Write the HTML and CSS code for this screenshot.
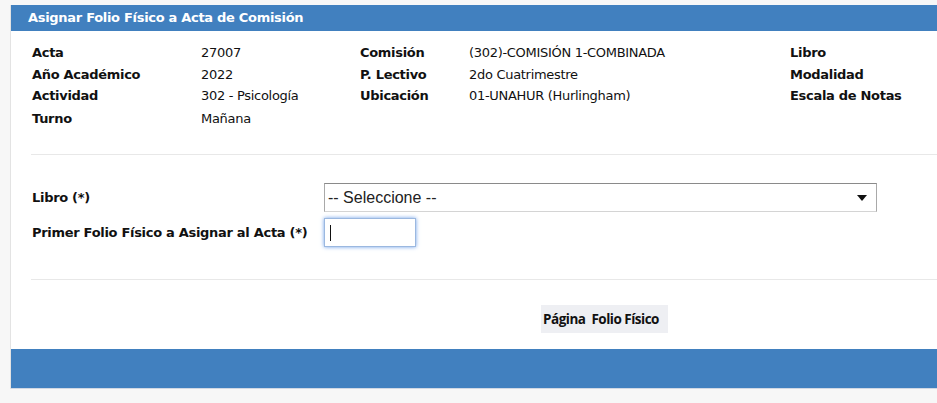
FILE: index.html
```html
<!DOCTYPE html>
<html lang="es">
<head>
  <meta charset="UTF-8" />
  <title>Asignar Folio Físico</title>
  <link rel="stylesheet" href="styles.css">
</head>
<body>

  <div class="panel">
    <div class="panel-titulo">Asignar Folio Físico a Acta de Comisión</div>

    <div class="datos">
      <div class="col col-1">
        <span class="lbl">Acta</span><span class="val">27007</span>
        <span class="lbl">Año Académico</span><span class="val">2022</span>
        <span class="lbl">Actividad</span><span class="val">302 - Psicología</span>
        <span class="lbl">Turno</span><span class="val">Mañana</span>
      </div>
      <div class="col col-2">
        <span class="lbl">Comisión</span><span class="val">(302)-COMISIÓN 1-COMBINADA</span>
        <span class="lbl">P. Lectivo</span><span class="val">2do Cuatrimestre</span>
        <span class="lbl">Ubicación</span><span class="val">01-UNAHUR (Hurlingham)</span>
      </div>
      <div class="col col-3">
        <span class="lbl">Libro</span>
        <span class="lbl">Modalidad</span>
        <span class="lbl">Escala de Notas</span>
      </div>
    </div>

    <hr class="sep">

    <div class="form">
      <div class="fila">
        <label class="lbl" for="libro">Libro (*)</label>
        <div class="select">
          <span>-- Seleccione --</span>
          <svg width="10" height="6" viewBox="0 0 10 6"><path d="M0 0h10L5 6z" fill="#111"/></svg>
        </div>
      </div>
      <div class="fila">
        <label class="lbl" for="folio">Primer Folio Físico a Asignar al Acta (*)</label>
        <div class="input-folio"><span class="cursor"></span></div>
      </div>
    </div>

    <hr class="sep sep-2">

    <div class="acciones">
      <button class="btn-pagina">Página&nbsp; Folio Físico</button>
    </div>

    <div class="panel-pie"></div>
  </div>

</body>
</html>
```

FILE: styles.css
```css
body {
  margin: 0;
  padding: 5px 0 15px 10px;
  background: #f7f7f7;
  font-family: Verdana, "DejaVu Sans", sans-serif;
  font-size: 13px;
  color: #111;
}

.panel {
  background: #fff;
  border-left: 1px solid #e3e3e3;
}

.panel-titulo {
  background: #4180bf;
  color: #fff;
  font-weight: bold;
  font-size: 13px;
  height: 26px;
  line-height: 26px;
  padding-left: 17px;
  letter-spacing: -0.3px;
}

.datos {
  display: grid;
  grid-template-columns: 328px 430px 1fr;
  padding: 11px 0 0 21px;
  height: 111px;
  box-sizing: border-box;
}

.col {
  display: grid;
  grid-auto-rows: 21.5px;
  align-items: center;
  align-content: start;
}

.col-1 { grid-template-columns: 169px 1fr; }
.col-2 { grid-template-columns: 109px 1fr; }
.col-1 span:nth-child(n+7) { margin-top: 3px; }

.lbl {
  font-weight: bold;
  letter-spacing: -0.3px;
  white-space: nowrap;
}

.val {
  letter-spacing: -0.3px;
  white-space: nowrap;
}

.sep {
  border: 0;
  border-top: 1px solid #e8e8e8;
  margin: 12px 0 0 20px;
}

.form {
  padding: 28px 0 0 21px;
  height: 124px;
  box-sizing: border-box;
}

.fila {
  display: flex;
  align-items: center;
  margin-bottom: 6px;
}

.fila .lbl {
  width: 292px;
}

.select {
  width: 553px;
  height: 29px;
  box-sizing: border-box;
  border: 1px solid #a9a9a9;
  border-top-color: #8a8a8a;
  border-bottom-color: #d4d4d4;
  display: flex;
  align-items: center;
  justify-content: space-between;
  padding: 0 9px 0 3px;
  font-family: "Liberation Sans", Arial, sans-serif;
  font-size: 16px;
  color: #222;
}

.input-folio {
  width: 92px;
  height: 29px;
  box-sizing: border-box;
  border: 1px solid #9bb8e0;
  box-shadow: 0 0 4px #6d9fe8;
  display: flex;
  align-items: center;
  padding-left: 5px;
}

.cursor {
  width: 1px;
  height: 16px;
  background: #111;
}

.sep-2 {
  margin-top: 0;
}

.acciones {
  display: flex;
  padding: 25px 0 16px 530px;
}

.btn-pagina {
  background: #eeeff3;
  border: 0;
  height: 28px;
  padding: 0 9px 0 2px;
  font-family: "Open Sans", sans-serif;
  font-weight: bold;
  font-size: 13.5px;
  letter-spacing: -0.5px;
  color: #111;
}

.panel-pie {
  background: #4180bf;
  height: 39px;
  border-bottom: 1px solid #d0d8e4;
}
```
